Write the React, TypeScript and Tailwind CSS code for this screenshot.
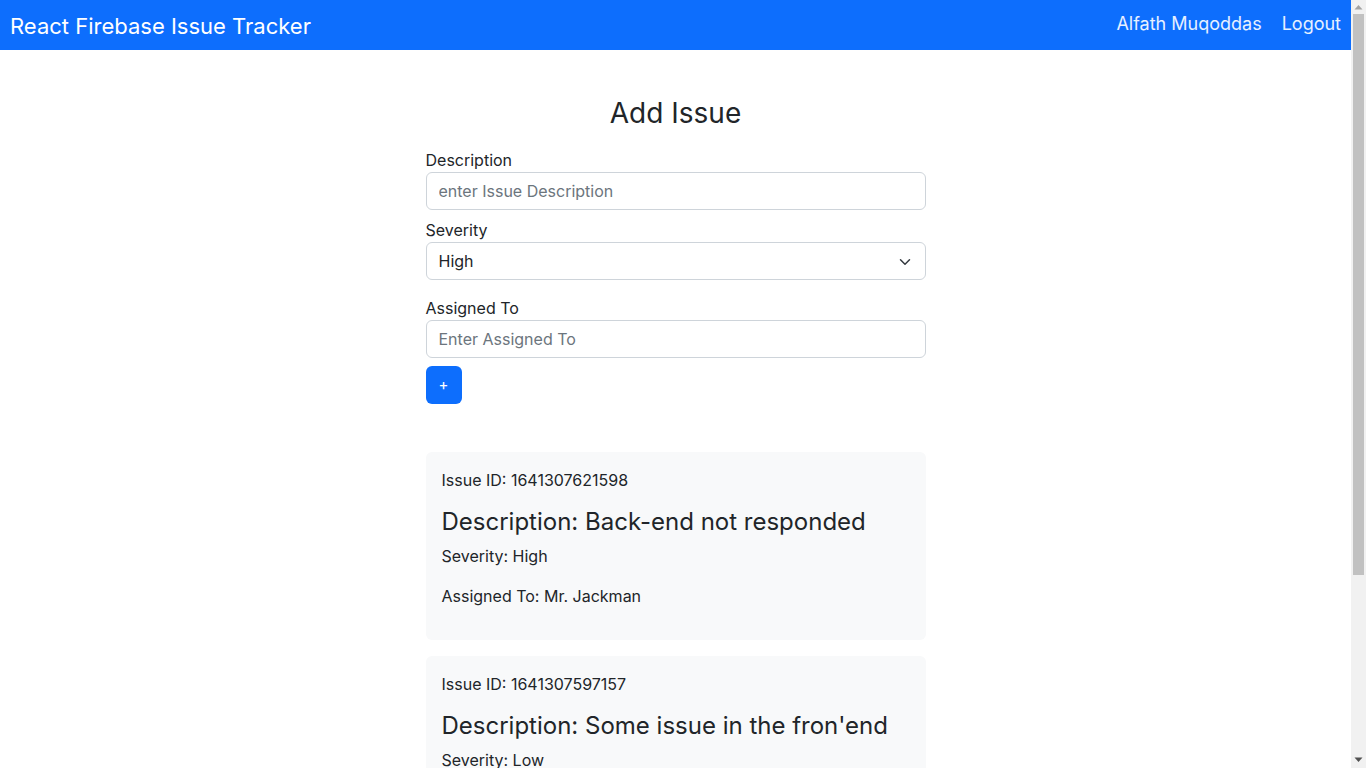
import React from "react";

const issues = [
  { id: "1641307621598", desc: "Back-end not responded", sev: "High", to: "Mr. Jackman" },
  { id: "1641307597157", desc: "Some issue in the fron'end", sev: "Low", to: "Mr. Jackman" },
];

function FakeScrollbar() {
  return (
    <div className="fixed top-0 right-0 w-[15px] h-[768px] bg-[#f1f1f1]">
      <svg className="absolute left-[3px] top-[4px]" width="9" height="6" viewBox="0 0 9 6">
        <path d="M0.5 5.5L4.5 1L8.5 5.5Z" fill="#a3a3a3" />
      </svg>
      <div className="absolute left-[2px] top-[14px] w-[11px] h-[561px] bg-[#c1c1c1]" />
      <svg className="absolute left-[3px] top-[757px]" width="9" height="6" viewBox="0 0 9 6">
        <path d="M0.5 0.5L4.5 5L8.5 0.5Z" fill="#505050" />
      </svg>
    </div>
  );
}

export default function App() {
  return (
    <div className="w-[1351px] min-h-[1005px] bg-white text-[#212529]" style={{ fontFamily: "Inter, 'Noto Sans', sans-serif" }}>
      <nav className="h-[50px] bg-[#0d6efd] flex items-center justify-between pl-[10px] pr-[10px]">
        <span className="text-[22px] text-white leading-[30px] mt-[2px]">React Firebase Issue Tracker</span>
        <div className="flex items-center gap-[20px] text-[18px] text-white/90 leading-[27px] mb-[3px]">
          <span>Alfath Muqoddas</span>
          <span>Logout</span>
        </div>
      </nav>
      <main className="w-[500px] mx-auto pt-[46px]">
        <h3 className="text-[28px] leading-[34px] text-center font-normal">Add Issue</h3>
        <div className="mt-[18px]">
          <label className="block text-[16px] leading-[24px]">Description</label>
          <input
            className="block w-full h-[38px] border border-[#ced4da] rounded-[6px] px-[12px] text-[16px] placeholder:text-[#6c757d] outline-none"
            placeholder="enter Issue Description"
          />
          <label className="block text-[16px] leading-[24px] mt-[8px]">Severity</label>
          <div className="relative h-[38px] border border-[#ced4da] rounded-[6px] flex items-center px-[12px] text-[16px]">
            <span>High</span>
            <svg className="absolute right-[13px] top-[13px]" width="14" height="12" viewBox="0 0 16 16" fill="none">
              <path d="M2 5l6 6 6-6" stroke="#343a40" strokeWidth="2" strokeLinecap="round" strokeLinejoin="round" />
            </svg>
          </div>
          <label className="block text-[16px] leading-[24px] mt-[16px]">Assigned To</label>
          <input
            className="block w-full h-[38px] border border-[#ced4da] rounded-[6px] px-[12px] text-[16px] placeholder:text-[#6c757d] outline-none"
            placeholder="Enter Assigned To"
          />
          <button className="mt-[8px] w-[36px] h-[38px] bg-[#0d6efd] rounded-[6px] text-white text-[15px] flex items-center justify-center">
            +
          </button>
        </div>
        <div className="mt-[48px] flex flex-col gap-[16px]">
          {issues.map((i) => (
            <div key={i.id} className="bg-[#f8f9fa] rounded-[6px] p-[16px]">
              <p className="text-[16px] leading-[24px] mb-[15px]">Issue ID: {i.id}</p>
              <h4 className="text-[24px] leading-[29px] font-normal mb-[8px]">Description: {i.desc}</h4>
              <p className="text-[16px] leading-[24px] mb-[16px]">Severity: {i.sev}</p>
              <p className="text-[16px] leading-[24px] mb-[16px]">Assigned To: {i.to}</p>
            </div>
          ))}
        </div>
      </main>
      <FakeScrollbar />
    </div>
  );
}
